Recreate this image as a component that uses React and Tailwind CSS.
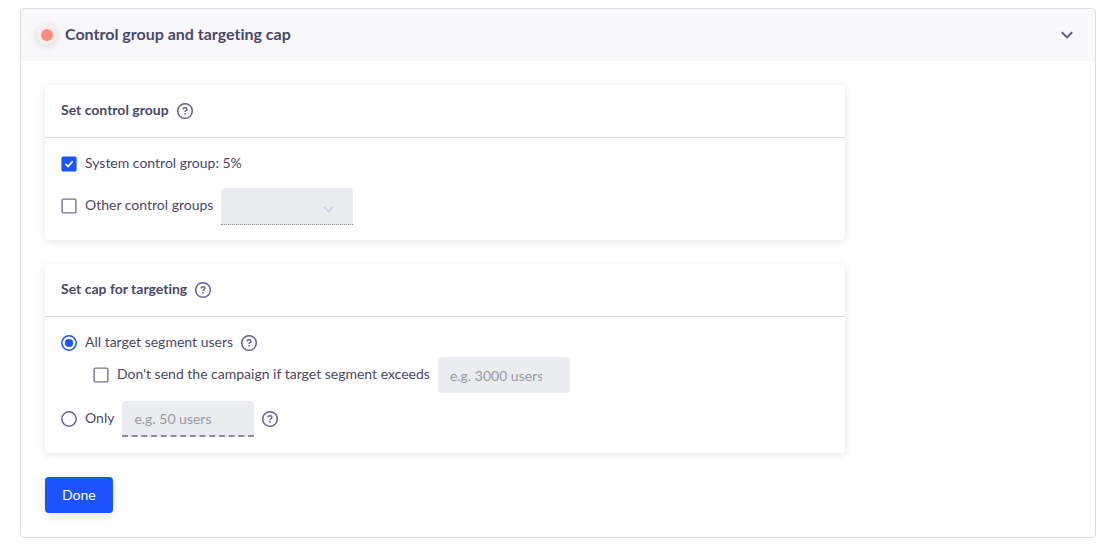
import { useState } from "react";

function HelpIcon({ label }) {
  return (
    <button type="button" aria-label={label} className="block size-4 shrink-0">
      <svg viewBox="0 0 16 16" fill="none" stroke="#66629a" className="size-4 overflow-visible">
        <circle cx="8" cy="8" r="7.3" strokeWidth="1.5" />
        <path d="M6.1 6.5C6.1 5.3 6.9 4.7 8 4.7s1.9.6 1.9 1.7c0 1.3-1.9 1.3-1.9 2.6" strokeWidth="1.4" />
        <path d="M8 10v1.5" strokeWidth="1.5" />
      </svg>
    </button>
  );
}

function Checkbox({ id, checked, onChange }) {
  return (
    <span className="grid size-4 shrink-0">
      <input
        id={id}
        type="checkbox"
        checked={checked}
        onChange={(e) => onChange(e.target.checked)}
        className="col-start-1 row-start-1 m-0 size-4 appearance-none"
      />
      <svg viewBox="0 0 16 16" fill="none" className="pointer-events-none col-start-1 row-start-1 size-4">
        {checked ? (
          <>
            <rect x="0.4" y="0.4" width="15.2" height="15.2" rx="1.6" fill="#1a53ff" />
            <path d="M4.4 7.9l2.6 2.6 4.6-5.1" stroke="#fff" strokeWidth="1.7" />
          </>
        ) : (
          <rect x="1.1" y="1.1" width="13.8" height="13.8" rx="1.2" stroke="#7571a2" strokeWidth="1.4" />
        )}
      </svg>
    </span>
  );
}

function Radio({ id, checked, onChange }) {
  return (
    <span className="grid size-4 shrink-0">
      <input
        id={id}
        type="radio"
        name="cap"
        checked={checked}
        onChange={onChange}
        className="col-start-1 row-start-1 m-0 size-4 appearance-none rounded-full"
      />
      <svg viewBox="0 0 16 16" fill="none" className="pointer-events-none col-start-1 row-start-1 size-4">
        <circle cx="8" cy="8" r="7.2" stroke={checked ? "#1a53ff" : "#66629a"} strokeWidth="1.5" />
        {checked && <circle cx="8" cy="8" r="4.1" fill="#1a53ff" />}
      </svg>
    </span>
  );
}

function Label({ htmlFor, children }) {
  return (
    <label htmlFor={htmlFor} className="pb-0.5 leading-[18px]">
      {children}
    </label>
  );
}

function Card({ title, help, children }) {
  return (
    <section className="max-w-[800px] rounded bg-white shadow-[0_2px_8px_rgba(0,0,0,0.1)]">
      <div className="flex h-[53px] items-center gap-2 border-b border-[#dcdcde] px-4">
        <h3 className="pb-0.5 text-sm font-bold">{title}</h3>
        <HelpIcon label={help} />
      </div>
      <div className="p-4">{children}</div>
    </section>
  );
}

export default function App() {
  const [open, setOpen] = useState(true);
  const [systemGroup, setSystemGroup] = useState(true);
  const [otherGroups, setOtherGroups] = useState(false);
  const [limitSend, setLimitSend] = useState(false);
  const [cap, setCap] = useState("all");

  return (
    <main className="pt-2 pr-[11px] pb-4 pl-5 font-['Lato','Open_Sans',sans-serif] text-sm text-[#4a4868] [font-variant-ligatures:none]">
      <div className="rounded border border-[#dcdcde] bg-white">
        <header className="flex h-[52px] items-center rounded-t bg-[#f8f8fb] pr-5 pl-4">
          <span className="grid size-5 place-items-center rounded-full bg-[#ffeeed] shadow-[0_1px_8px_rgba(0,0,0,0.15)]">
            <span className="size-3 rounded-full bg-[#ff8a80]" />
          </span>
          <h2 className="ml-2 pb-0.5 text-base font-bold">Control group and targeting cap</h2>
          <button
            type="button"
            aria-label="Toggle section"
            aria-expanded={open}
            onClick={() => setOpen(!open)}
            className="ml-auto"
          >
            <svg viewBox="0 0 16 16" fill="none" stroke="#5f5a8c" strokeWidth="2" className="size-4">
              <path d="M2.8 5.2L8 10.4l5.2-5.2" />
            </svg>
          </button>
        </header>

        {open && (
          <div className="flex flex-col gap-6 p-6">
            <Card title="Set control group" help="About control groups">
              <div className="flex items-center gap-2">
                <Checkbox id="system-group" checked={systemGroup} onChange={setSystemGroup} />
                <Label htmlFor="system-group">System control group: 5%</Label>
              </div>
              <div className="mt-3.5 flex items-center gap-2">
                <Checkbox id="other-groups" checked={otherGroups} onChange={setOtherGroups} />
                <Label htmlFor="other-groups">Other control groups</Label>
                <div className="-mb-px grid items-center">
                  <select
                    aria-label="Control groups"
                    disabled={!otherGroups}
                    className="col-start-1 row-start-1 h-[37px] w-[132px] appearance-none rounded-t border-b border-dotted border-[#8e8d96] bg-[#ebecf1] px-3 disabled:opacity-100"
                  >
                    <option value=""></option>
                  </select>
                  <svg viewBox="0 0 16 16" fill="none" stroke="#cfcde2" strokeWidth="1.7" className="pointer-events-none col-start-1 row-start-1 mt-1 mr-4 size-4 justify-self-end">
                    <path d="M3 5.8l4.5 4.5L12 5.8" />
                  </svg>
                </div>
              </div>
            </Card>

            <Card title="Set cap for targeting" help="About targeting cap">
              <div className="flex items-center gap-2">
                <Radio id="cap-all" checked={cap === "all"} onChange={() => setCap("all")} />
                <Label htmlFor="cap-all">All target segment users</Label>
                <HelpIcon label="About all target segment users" />
              </div>
              <div className="mt-1 ml-8 flex items-center gap-2">
                <Checkbox id="limit-send" checked={limitSend} onChange={setLimitSend} />
                <Label htmlFor="limit-send">Don't send the campaign if target segment exceeds</Label>
                <input
                  type="text"
                  aria-label="Maximum segment size"
                  placeholder="e.g. 3000 users"
                  disabled={!limitSend}
                  className="h-9 w-[132px] rounded bg-[#ebecf1] pr-7 pl-3 placeholder:text-[#9a9a9e]"
                />
              </div>
              <div className="mt-2 flex items-center gap-2">
                <Radio id="cap-only" checked={cap === "only"} onChange={() => setCap("only")} />
                <Label htmlFor="cap-only">Only</Label>
                <input
                  type="text"
                  aria-label="Number of users"
                  placeholder="e.g. 50 users"
                  disabled={cap !== "only"}
                  className="h-9 w-[132px] rounded-t border-b-2 border-dashed border-[#8e8d96] bg-[#ebecf1] pr-7 pl-3 placeholder:text-[#9a9a9e]"
                />
                <HelpIcon label="About the user limit" />
              </div>
            </Card>

            <button
              type="button"
              className="h-9 self-start rounded bg-[#1a53ff] px-[17px] text-sm text-white shadow-[0_2px_8px_rgba(0,0,0,0.12)]"
            >
              Done
            </button>
          </div>
        )}
      </div>
    </main>
  );
}
